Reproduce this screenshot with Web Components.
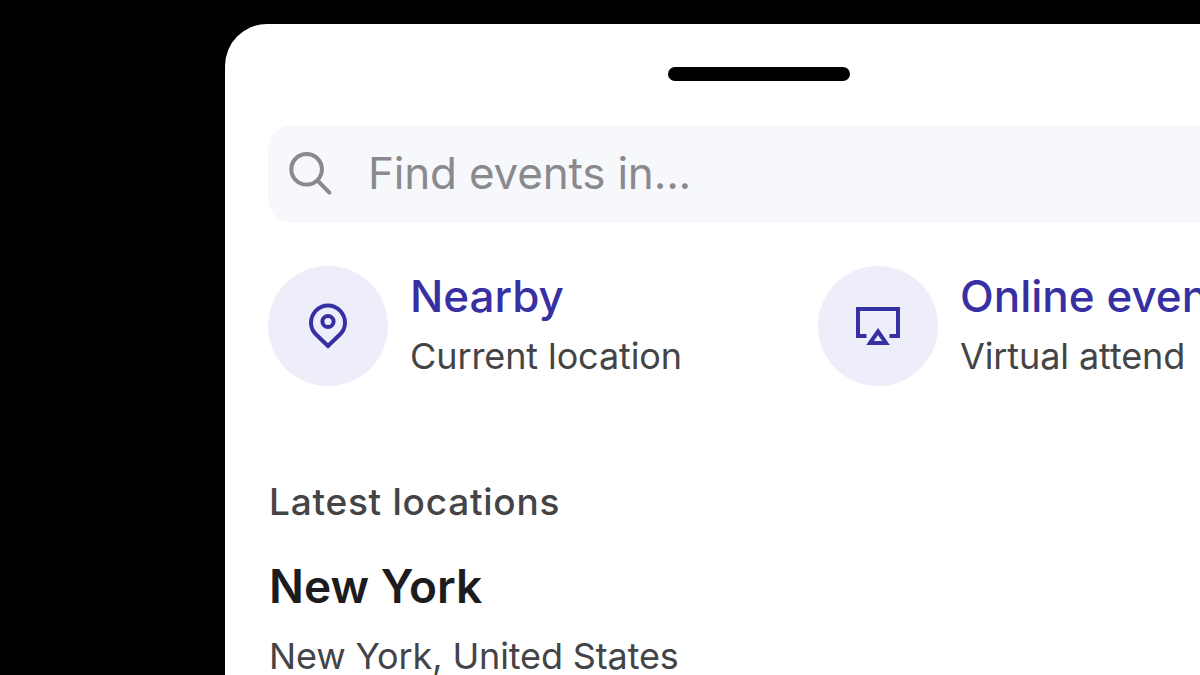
<!DOCTYPE html>
<html>
<head>
<meta charset="utf-8">
<title>Find events</title>
<style>
  html, body { margin: 0; height: 100%; background: #000; overflow: hidden; }
  body { font-family: Inter, "Noto Sans", sans-serif; }
</style>
</head>
<body>
<phone-sheet>
  <search-box slot="search" placeholder="Find events in..."></search-box>
  <div slot="options">
    <option-tile heading="Nearby" sub="Current location" icon="pin"></option-tile>
    <option-tile heading="Online events" sub="Virtual attend" icon="airplay"></option-tile>
  </div>
  <span slot="section">Latest locations</span>
  <location-row slot="rows" name="New York" detail="New York, United States"></location-row>
</phone-sheet>

<script>
const ICONS = {
  search: `<svg width="44" height="44" viewBox="0 0 44 44" fill="none" stroke="#8a8a8e" stroke-width="4" stroke-linecap="round">
    <circle cx="17.6" cy="17.3" r="15.3"/><path d="M29 29 L40.4 40.6"/></svg>`,
  pin: `<svg width="38" height="46" viewBox="0 0 38 46" fill="none" stroke="#3730a3" stroke-width="4" stroke-linejoin="miter">
    <path d="M19 43 L6.6 31 C3.4 27.8 2 24.2 2 19.8 C2 10.4 9.6 2.5 19 2.5 C28.4 2.5 36 10.4 36 19.8 C36 24.2 34.6 27.8 31.4 31 Z"/>
    <circle cx="19" cy="18.5" r="5.6"/></svg>`,
  airplay: `<svg width="44" height="38" viewBox="0 0 44 38" fill="none" stroke="#3730a3" stroke-width="4">
    <path d="M10.5 29 H2 V2 H42 V29 H33.5"/>
    <path d="M22 24.5 L30 36 H14 Z" stroke-linejoin="miter"/></svg>`
};

class PhoneSheet extends HTMLElement {
  constructor() {
    super();
    const root = this.attachShadow({ mode: "open" });
    root.innerHTML = `
      <style>
        :host {
          display: block;
          box-sizing: border-box;
          width: 1100px;
          height: 760px;
          margin: 24px 0 0 225px;
          padding: 43px 0 0 43px;
          background: #fff;
          border-radius: 42px 42px 0 0;
        }
        .notch {
          width: 182px;
          height: 14px;
          margin-left: 400px;
          margin-bottom: 44px;
          background: #000;
          border-radius: 7px;
        }
        ::slotted([slot="options"]) {
          display: grid;
          grid-template-columns: 550px 550px;
          margin-top: 43px;
        }
        ::slotted([slot="section"]) {
          display: block;
          margin: 94px 0 0 1px;
          font-size: 37px;
          line-height: 44px;
          font-weight: 500;
          letter-spacing: 0.75px;
          color: #444446;
        }
        ::slotted([slot="rows"]) {
          margin-left: 1px;
        }
      </style>
      <div class="notch"></div>
      <slot name="search"></slot>
      <slot name="options"></slot>
      <slot name="section"></slot>
      <slot name="rows"></slot>
    `;
  }
}

class SearchBox extends HTMLElement {
  connectedCallback() {
    const root = this.shadowRoot || this.attachShadow({ mode: "open" });
    root.innerHTML = `
      <style>
        :host {
          display: flex;
          align-items: center;
          gap: 35px;
          height: 98px;
          padding-left: 21px;
          background: #f7f8fc;
          border-radius: 24px;
          font-size: 44px;
          letter-spacing: -0.2px;
          color: #8a8a8e;
        }
        span { position: relative; top: -1px; }
        svg { display: block; }
      </style>
      ${ICONS.search}
      <span>${this.getAttribute("placeholder") || ""}</span>
    `;
  }
}

class OptionTile extends HTMLElement {
  connectedCallback() {
    const root = this.shadowRoot || this.attachShadow({ mode: "open" });
    root.innerHTML = `
      <style>
        :host {
          display: flex;
          align-items: center;
          gap: 22px;
          white-space: nowrap;
        }
        .circle {
          flex: none;
          display: flex;
          align-items: center;
          justify-content: center;
          width: 120px;
          height: 120px;
          border-radius: 50%;
          background: #eeedfa;
        }
        .heading {
          font-size: 44px;
          line-height: 60px;
          font-weight: 500;
          color: #3730a3;
        }
        .sub {
          font-size: 36px;
          line-height: 60px;
          letter-spacing: -0.1px;
          color: #444446;
        }
      </style>
      <div class="circle">${ICONS[this.getAttribute("icon")]}</div>
      <div>
        <div class="heading">${this.getAttribute("heading")}</div>
        <div class="sub">${this.getAttribute("sub")}</div>
      </div>
    `;
  }
}

class LocationRow extends HTMLElement {
  connectedCallback() {
    const root = this.shadowRoot || this.attachShadow({ mode: "open" });
    root.innerHTML = `
      <style>
        :host { display: block; margin-top: 34px; white-space: nowrap; }
        .name {
          font-size: 46px;
          line-height: 56px;
          font-weight: 600;
          color: #1c1c1e;
        }
        .detail {
          margin-top: 20px;
          font-size: 36px;
          line-height: 44px;
          letter-spacing: -0.13px;
          color: #444446;
        }
      </style>
      <div class="name">${this.getAttribute("name")}</div>
      <div class="detail">${this.getAttribute("detail")}</div>
    `;
  }
}

customElements.define("phone-sheet", PhoneSheet);
customElements.define("search-box", SearchBox);
customElements.define("option-tile", OptionTile);
customElements.define("location-row", LocationRow);
</script>
</body>
</html>
